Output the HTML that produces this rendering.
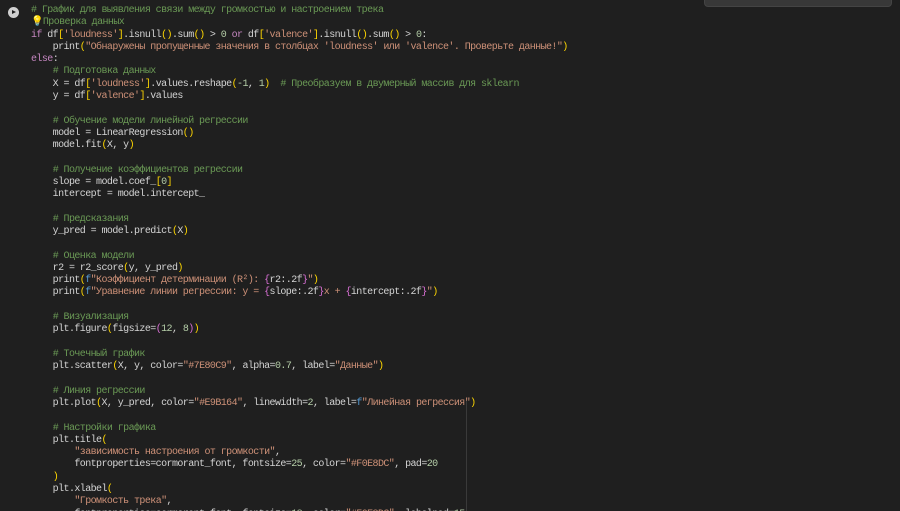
<!DOCTYPE html>
<html><head><meta charset="utf-8"><style>
html,body{margin:0;padding:0;background:#1f1f1f;width:900px;height:511px;overflow:hidden;position:relative}
pre{position:absolute;left:31px;top:5px;margin:0;font-family:"Liberation Mono","DejaVu Sans Mono",monospace;font-size:10px;letter-spacing:-0.58px;line-height:12.28px;color:#d4d4d4;white-space:pre}
.c{color:#6a9955}.s{color:#ce9178}.k{color:#c586c0}.n{color:#b5cea8}.b{color:#ffd700}.p{color:#da70d6}.f{color:#569cd6}
.tb{position:absolute;left:704px;top:-6px;width:186px;height:11px;background:#383838;border-radius:4px;border:1px solid #444}
.play{position:absolute;left:8px;top:7px;width:11px;height:11px;border-radius:50%;background:#d0d0d0}
.play:after{content:"";position:absolute;left:4px;top:3px;border-left:4px solid #1f1f1f;border-top:2.5px solid transparent;border-bottom:2.5px solid transparent}
.vl{position:absolute;left:466px;top:400px;width:1px;height:111px;background:#3a3a3a}
</style></head><body>
<div class="tb"></div>
<div class="play"></div>
<div class="vl"></div>
<pre><span class="c"># График для выявления связи между громкостью и настроением трека</span>
<span style="color:#f2c744">💡</span><span class="c">Проверка данных</span>
<span class="k">if</span> df<span class="b">[</span><span class="s">'loudness'</span><span class="b">]</span>.isnull<span class="b">()</span>.sum<span class="b">()</span> &gt; <span class="n">0</span> <span class="k">or</span> df<span class="b">[</span><span class="s">'valence'</span><span class="b">]</span>.isnull<span class="b">()</span>.sum<span class="b">()</span> &gt; <span class="n">0</span>:
    print<span class="b">(</span><span class="s">"Обнаружены пропущенные значения в столбцах 'loudness' или 'valence'. Проверьте данные!"</span><span class="b">)</span>
<span class="k">else</span>:
    <span class="c"># Подготовка данных</span>
    X = df<span class="b">[</span><span class="s">'loudness'</span><span class="b">]</span>.values.reshape<span class="b">(</span><span class="n">-1</span>, <span class="n">1</span><span class="b">)</span>  <span class="c"># Преобразуем в двумерный массив для sklearn</span>
    y = df<span class="b">[</span><span class="s">'valence'</span><span class="b">]</span>.values

    <span class="c"># Обучение модели линейной регрессии</span>
    model = LinearRegression<span class="b">()</span>
    model.fit<span class="b">(</span>X, y<span class="b">)</span>

    <span class="c"># Получение коэффициентов регрессии</span>
    slope = model.coef_<span class="b">[</span><span class="n">0</span><span class="b">]</span>
    intercept = model.intercept_

    <span class="c"># Предсказания</span>
    y_pred = model.predict<span class="b">(</span>X<span class="b">)</span>

    <span class="c"># Оценка модели</span>
    r2 = r2_score<span class="b">(</span>y, y_pred<span class="b">)</span>
    print<span class="b">(</span><span class="f">f</span><span class="s">"Коэффициент детерминации (R²): </span><span class="p">{</span>r2:.2f<span class="p">}</span><span class="s">"</span><span class="b">)</span>
    print<span class="b">(</span><span class="f">f</span><span class="s">"Уравнение линии регрессии: y = </span><span class="p">{</span>slope:.2f<span class="p">}</span><span class="s">x + </span><span class="p">{</span>intercept:.2f<span class="p">}</span><span class="s">"</span><span class="b">)</span>

    <span class="c"># Визуализация</span>
    plt.figure<span class="b">(</span>figsize=<span class="p">(</span><span class="n">12</span>, <span class="n">8</span><span class="p">)</span><span class="b">)</span>

    <span class="c"># Точечный график</span>
    plt.scatter<span class="b">(</span>X, y, color=<span class="s">"#7E80C9"</span>, alpha=<span class="n">0.7</span>, label=<span class="s">"Данные"</span><span class="b">)</span>

    <span class="c"># Линия регрессии</span>
    plt.plot<span class="b">(</span>X, y_pred, color=<span class="s">"#E9B164"</span>, linewidth=<span class="n">2</span>, label=<span class="f">f</span><span class="s">"Линейная регрессия"</span><span class="b">)</span>

    <span class="c"># Настройки графика</span>
    plt.title<span class="b">(</span>
        <span class="s">"зависимость настроения от громкости"</span>,
        fontproperties=cormorant_font, fontsize=<span class="n">25</span>, color=<span class="s">"#F0E8DC"</span>, pad=<span class="n">20</span>
    <span class="b">)</span>
    plt.xlabel<span class="b">(</span>
        <span class="s">"Громкость трека"</span>,
        fontproperties=cormorant_font, fontsize=<span class="n">18</span>, color=<span class="s">"#F0E8DC"</span>, labelpad=<span class="n">15</span>
</pre>
</body></html>
